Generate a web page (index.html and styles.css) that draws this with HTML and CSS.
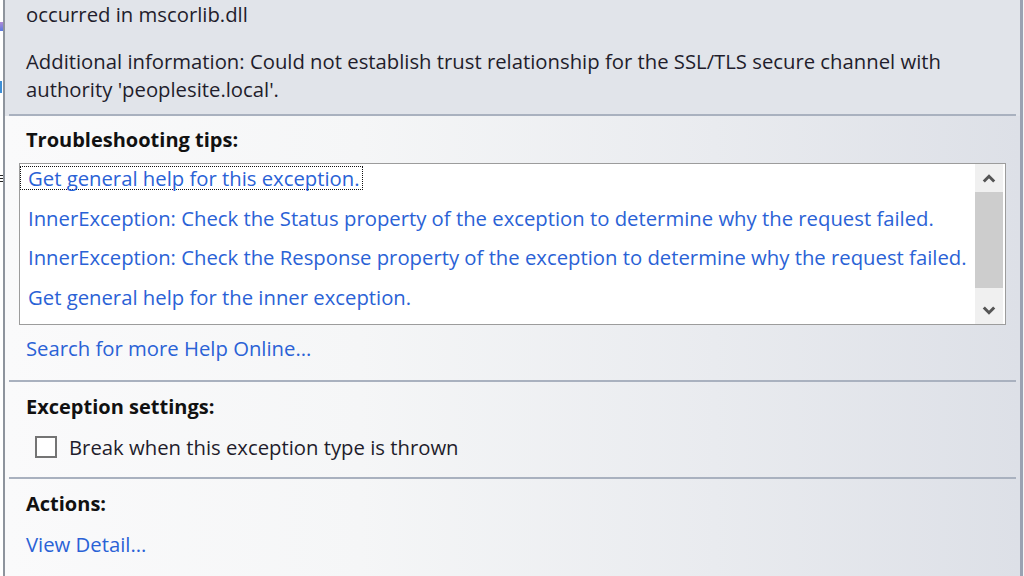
FILE: index.html
```html
<!DOCTYPE html>
<html>
<head>
<meta charset="utf-8">
<link rel="stylesheet" href="styles.css">
</head>
<body>
<div class="edge-left">
  <span class="frag frag-a"></span>
  <span class="frag frag-b"></span>
  <span class="frag frag-c"></span>
</div>
<div class="panel">
  <div class="top">
    <p class="msg msg-first">occurred in mscorlib.dll</p>
    <p class="msg msg-second">Additional information: Could not establish trust relationship for the SSL/TLS secure channel with<br>authority 'peoplesite.local'.</p>
  </div>
  <div class="sep"></div>
  <div class="section tips">
    <div class="heading">Troubleshooting tips:</div>
    <div class="listbox">
      <div class="items">
        <a class="item focused">Get general help for this exception.</a>
        <a class="item">InnerException: Check the Status property of the exception to determine why the request failed.</a>
        <a class="item">InnerException: Check the Response property of the exception to determine why the request failed.</a>
        <a class="item">Get general help for the inner exception.</a>
      </div>
      <div class="scrollbar">
        <div class="sb-btn">
          <svg width="14" height="9" viewBox="0 0 14 9"><path d="M1.8 7.5 L7 2.3 L12.2 7.5" fill="none" stroke="#555" stroke-width="3"/></svg>
        </div>
        <div class="sb-thumb"></div>
        <div class="sb-track"></div>
        <div class="sb-btn">
          <svg width="14" height="9" viewBox="0 0 14 9"><path d="M1.8 1.5 L7 6.7 L12.2 1.5" fill="none" stroke="#555" stroke-width="3"/></svg>
        </div>
      </div>
    </div>
    <a class="link search">Search for more Help Online...</a>
  </div>
  <div class="sep"></div>
  <div class="section settings">
    <div class="heading">Exception settings:</div>
    <label class="check-row"><span class="checkbox"></span><span class="check-label">Break when this exception type is thrown</span></label>
  </div>
  <div class="sep"></div>
  <div class="section actions">
    <div class="heading">Actions:</div>
    <a class="link detail">View Detail...</a>
  </div>
</div>
<div class="edge-right"></div>
</body>
</html>
```

FILE: styles.css
```css
html, body {
  margin: 0;
  padding: 0;
  height: 576px;
  overflow: hidden;
}

body {
  display: flex;
  font-family: "Open Sans", "Noto Sans", sans-serif;
  font-size: 20.3px;
  color: #1f1d2c;
  background: #ffffff;
}

.edge-left {
  width: 3px;
  flex: none;
  background: #ffffff;
  display: flex;
  flex-direction: column;
}

.frag {
  display: block;
  width: 3px;
}

.frag-a {
  margin-top: 22px;
  height: 9px;
  background: linear-gradient(#b08ad8, #5a7ae0);
}

.frag-b {
  margin-top: 50px;
  height: 12px;
  width: 2px;
  background: #3d8fd8;
}

.frag-c {
  margin-top: 82px;
  height: 7px;
  background: repeating-linear-gradient(#222 0 1px, transparent 1px 3px);
}

.panel {
  flex: 1;
  border-left: 2px solid #8e949d;
  border-right: 3px solid #9aa2b2;
  background: linear-gradient(to right, #fafafb 0%, #f5f6f7 35%, #e9ebef 70%, #dde0e7 100%);
  display: flex;
  flex-direction: column;
}

.edge-right {
  width: 1px;
  flex: none;
  background: #f4f4f6;
}

.top {
  background: #e1e4ea;
  padding: 0 0 11px 21px;
}

.msg {
  margin: 0;
  line-height: 28px;
  white-space: nowrap;
}

.msg-second {
  margin-top: 19px;
}

.sep {
  height: 2px;
  margin: 0 4px;
  background: #a9b1bf;
  flex: none;
}

.top + .sep {
  margin: 0;
  background: linear-gradient(to right, #e1e4ea 4px, #a9b1bf 4px, #a9b1bf calc(100% - 4px), #e1e4ea calc(100% - 4px));
}

.section {
  padding-left: 21px;
  display: flex;
  flex-direction: column;
  align-items: flex-start;
}

.heading {
  font-weight: 700;
  font-size: 20px;
  color: #111;
  line-height: 26px;
}

.link, .item {
  color: #2a62d6;
  line-height: 26px;
  cursor: pointer;
}

.tips {
  padding-top: 11px;
  padding-bottom: 19px;
}

.listbox {
  margin: 10px 14px 0 -7px;
  align-self: stretch;
  height: 162px;
  box-sizing: border-box;
  border: 1px solid #9c9c9c;
  background: #ffffff;
  display: flex;
}

.items {
  flex: 1;
  padding-top: 2px;
  display: flex;
  flex-direction: column;
  align-items: flex-start;
  gap: 15.5px;
  overflow: hidden;
}

.item {
  padding: 0 2px 0 7px;
  line-height: 22px;
  border: 1px dotted transparent;
  white-space: nowrap;
}

.item.focused {
  border-color: #111;
}

.scrollbar {
  width: 28px;
  flex: none;
  margin-right: 2px;
  background: #f0f0f0;
  display: flex;
  flex-direction: column;
}

.sb-btn {
  height: 28px;
  display: flex;
  align-items: center;
  justify-content: center;
}

.sb-thumb {
  height: 96px;
  background: #cdcdcd;
}

.sb-track {
  flex: 1;
}

.search {
  margin-top: 10px;
}

.settings {
  padding-top: 12px;
  padding-bottom: 17px;
}

.check-row {
  margin-top: 14px;
  margin-left: 9px;
  display: flex;
  align-items: center;
  gap: 12px;
  line-height: 26px;
}

.checkbox {
  width: 22px;
  height: 22px;
  box-sizing: border-box;
  border: 2px solid #747474;
  background: #ffffff;
}

.actions {
  padding-top: 12px;
}

.detail {
  margin-top: 14px;
}
```
